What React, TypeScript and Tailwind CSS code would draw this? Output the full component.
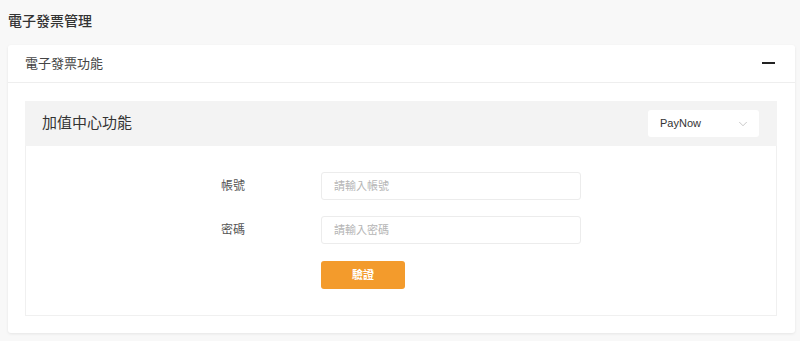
import { ChevronDown } from 'lucide-react'

const cjk = "font-['Liberation_Sans','Noto_Sans_CJK_TC',sans-serif]"

function FormRow({ label, placeholder, type = 'text' }: { label: string; placeholder: string; type?: string }) {
  return (
    <div className="flex items-center">
      <label className="w-[100px] text-[12px] text-[#555]">{label}</label>
      <input
        type={type}
        placeholder={placeholder}
        className="h-[28px] w-[260px] rounded-[3px] border border-[#ececec] bg-white px-[12px] text-[11px] text-[#333] placeholder:text-[#b5b5b5] focus:outline-none"
      />
    </div>
  )
}

export default function App() {
  return (
    <div className={`${cjk} min-h-[341px] bg-[#f8f8f8] pt-[11px]`}>
      <h1 className="ml-2 h-[20px] text-[14px] leading-[20px] font-medium text-[#333]">電子發票管理</h1>

      <div className="mt-[14px] ml-2 mr-[5px] rounded-[3px] bg-white shadow-[0_1px_3px_rgba(0,0,0,0.08)]">
        {/* 卡片標題 */}
        <div className="flex h-[38px] items-center justify-between border-b border-[#eeeeee] pl-[17px] pr-[20px]">
          <span className="text-[13px] text-[#444]">電子發票功能</span>
          <span className="mb-[1px] block h-[2px] w-[13px] bg-[#222]" />
        </div>

        <div className="pl-[17px] pr-[18px] pt-[18px] pb-[17px]">
          {/* 加值中心 */}
          <div className="flex h-[45px] items-center justify-between bg-[#f3f3f3] pl-[17px] pr-[18px]">
            <span className="text-[15px] text-[#333]">加值中心功能</span>
            <button className="flex h-[27px] w-[111px] items-center justify-between rounded-[3px] bg-white pl-[12px] pr-[9px] text-[11px] text-[#333]">
              PayNow
              <ChevronDown className="h-[14px] w-[14px] text-[#aaa]" strokeWidth={1.1} />
            </button>
          </div>

          <div className="flex justify-center border border-t-0 border-[#f0f0f0] pt-[26px] pb-[26px]">
            <div className="flex w-[360px] flex-col">
              <FormRow label="帳號" placeholder="請輸入帳號" />
              <div className="mt-[16px]">
                <FormRow label="密碼" placeholder="請輸入密碼" type="password" />
              </div>
              <div className="mt-[17px] pl-[100px]">
                <button className="h-[28px] w-[84px] rounded-[3px] bg-[#f39b2c] text-[11px] font-bold text-white">驗證</button>
              </div>
            </div>
          </div>
        </div>
      </div>
    </div>
  )
}
